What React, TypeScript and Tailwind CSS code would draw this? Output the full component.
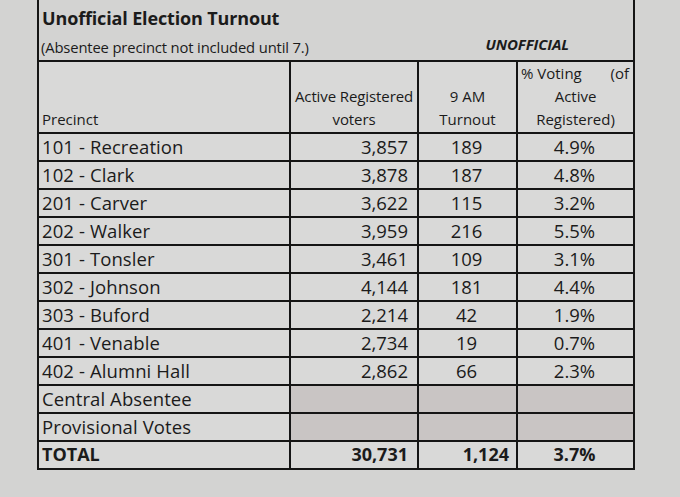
import React from "react";

type Row = { p: string; a: string; t: string; v: string };

const rows: Row[] = [
  { p: "101 - Recreation", a: "3,857", t: "189", v: "4.9%" },
  { p: "102 - Clark", a: "3,878", t: "187", v: "4.8%" },
  { p: "201 - Carver", a: "3,622", t: "115", v: "3.2%" },
  { p: "202 - Walker", a: "3,959", t: "216", v: "5.5%" },
  { p: "301 - Tonsler", a: "3,461", t: "109", v: "3.1%" },
  { p: "302 - Johnson", a: "4,144", t: "181", v: "4.4%" },
  { p: "303 - Buford", a: "2,214", t: "42", v: "1.9%" },
  { p: "401 - Venable", a: "2,734", t: "19", v: "0.7%" },
  { p: "402 - Alumni Hall", a: "2,862", t: "66", v: "2.3%" },
];

const grid = "grid grid-cols-[252px_128px_99px_115px]";

export default function App() {
  return (
    <div className="w-[680px] h-[497px] overflow-hidden bg-[#d3d3d2] text-[#1b1b1b] font-['Open_Sans','Liberation_Sans',sans-serif]">
      <div className="ml-[37px] w-[598px] border-x-2 border-[#151515]">
        <div className="h-[31px] pt-[7px] pl-[3px] text-[18px] font-bold leading-[23px] tracking-[-0.15px]">
          Unofficial Election Turnout
        </div>
        <div className="h-[29px] flex items-start pt-[7px] pl-[2px] leading-[18px]">
          <span className="text-[14.8px] tracking-[-0.15px]">(Absentee precinct not included until 7.)</span>
          <span className="ml-auto mr-[64px] mt-[-3px] text-[15px] font-bold italic tracking-[-0.1px]">UNOFFICIAL</span>
        </div>
        <div className="border-y-2 border-[#151515] bg-[#d9d9d8]">
          <div className={`${grid} h-[72px] border-b-2 border-[#151515] text-[15px] leading-[23px]`}>
            <div className="border-r-2 border-[#151515] flex items-end pb-[3px] pl-[3px]">Precinct</div>
            <div className="border-r-2 border-[#151515] flex flex-col justify-end items-center pb-[3px] text-center tracking-[-0.1px]">
              <span className="whitespace-nowrap">Active Registered</span>
              <span>voters</span>
            </div>
            <div className="border-r-2 border-[#151515] flex flex-col justify-end items-center pb-[3px]">
              <span>9 AM</span>
              <span>Turnout</span>
            </div>
            <div className="flex flex-col justify-end items-center pb-[3px]">
              <span className="flex w-full justify-between pl-[3px] pr-[4px] whitespace-nowrap">
                <span>% Voting</span>
                <span>(of</span>
              </span>
              <span>Active</span>
              <span>Registered)</span>
            </div>
          </div>
          {rows.map((r) => (
            <div key={r.p} className={`${grid} h-[28px] border-b-2 border-[#151515] text-[18.5px] leading-[26px]`}>
              <div className="border-r-2 border-[#151515] pl-[3px] whitespace-nowrap tracking-[0.1px]">{r.p}</div>
              <div className="border-r-2 border-[#151515] text-right pr-[9px]">{r.a}</div>
              <div className="border-r-2 border-[#151515] text-center pr-[2px]">{r.t}</div>
              <div className="text-center pr-[2px]">{r.v}</div>
            </div>
          ))}
          {["Central Absentee", "Provisional Votes"].map((p) => (
            <div key={p} className={`${grid} h-[28px] border-b-2 border-[#151515] text-[18.5px] leading-[26px]`}>
              <div className="border-r-2 border-[#151515] pl-[3px] whitespace-nowrap tracking-[0.1px]">{p}</div>
              <div className="border-r-2 border-[#151515] bg-[#c9c5c4]"></div>
              <div className="border-r-2 border-[#151515] bg-[#c9c5c4]"></div>
              <div className="bg-[#c9c5c4]"></div>
            </div>
          ))}
          <div className={`${grid} h-[26px] text-[18px] leading-[25px] font-bold`}>
            <div className="border-r-2 border-[#151515] pl-[3px]">TOTAL</div>
            <div className="border-r-2 border-[#151515] text-right pr-[9px]">30,731</div>
            <div className="border-r-2 border-[#151515] text-right pr-[7px]">1,124</div>
            <div className="text-center pr-[2px]">3.7%</div>
          </div>
        </div>
      </div>
    </div>
  );
}
